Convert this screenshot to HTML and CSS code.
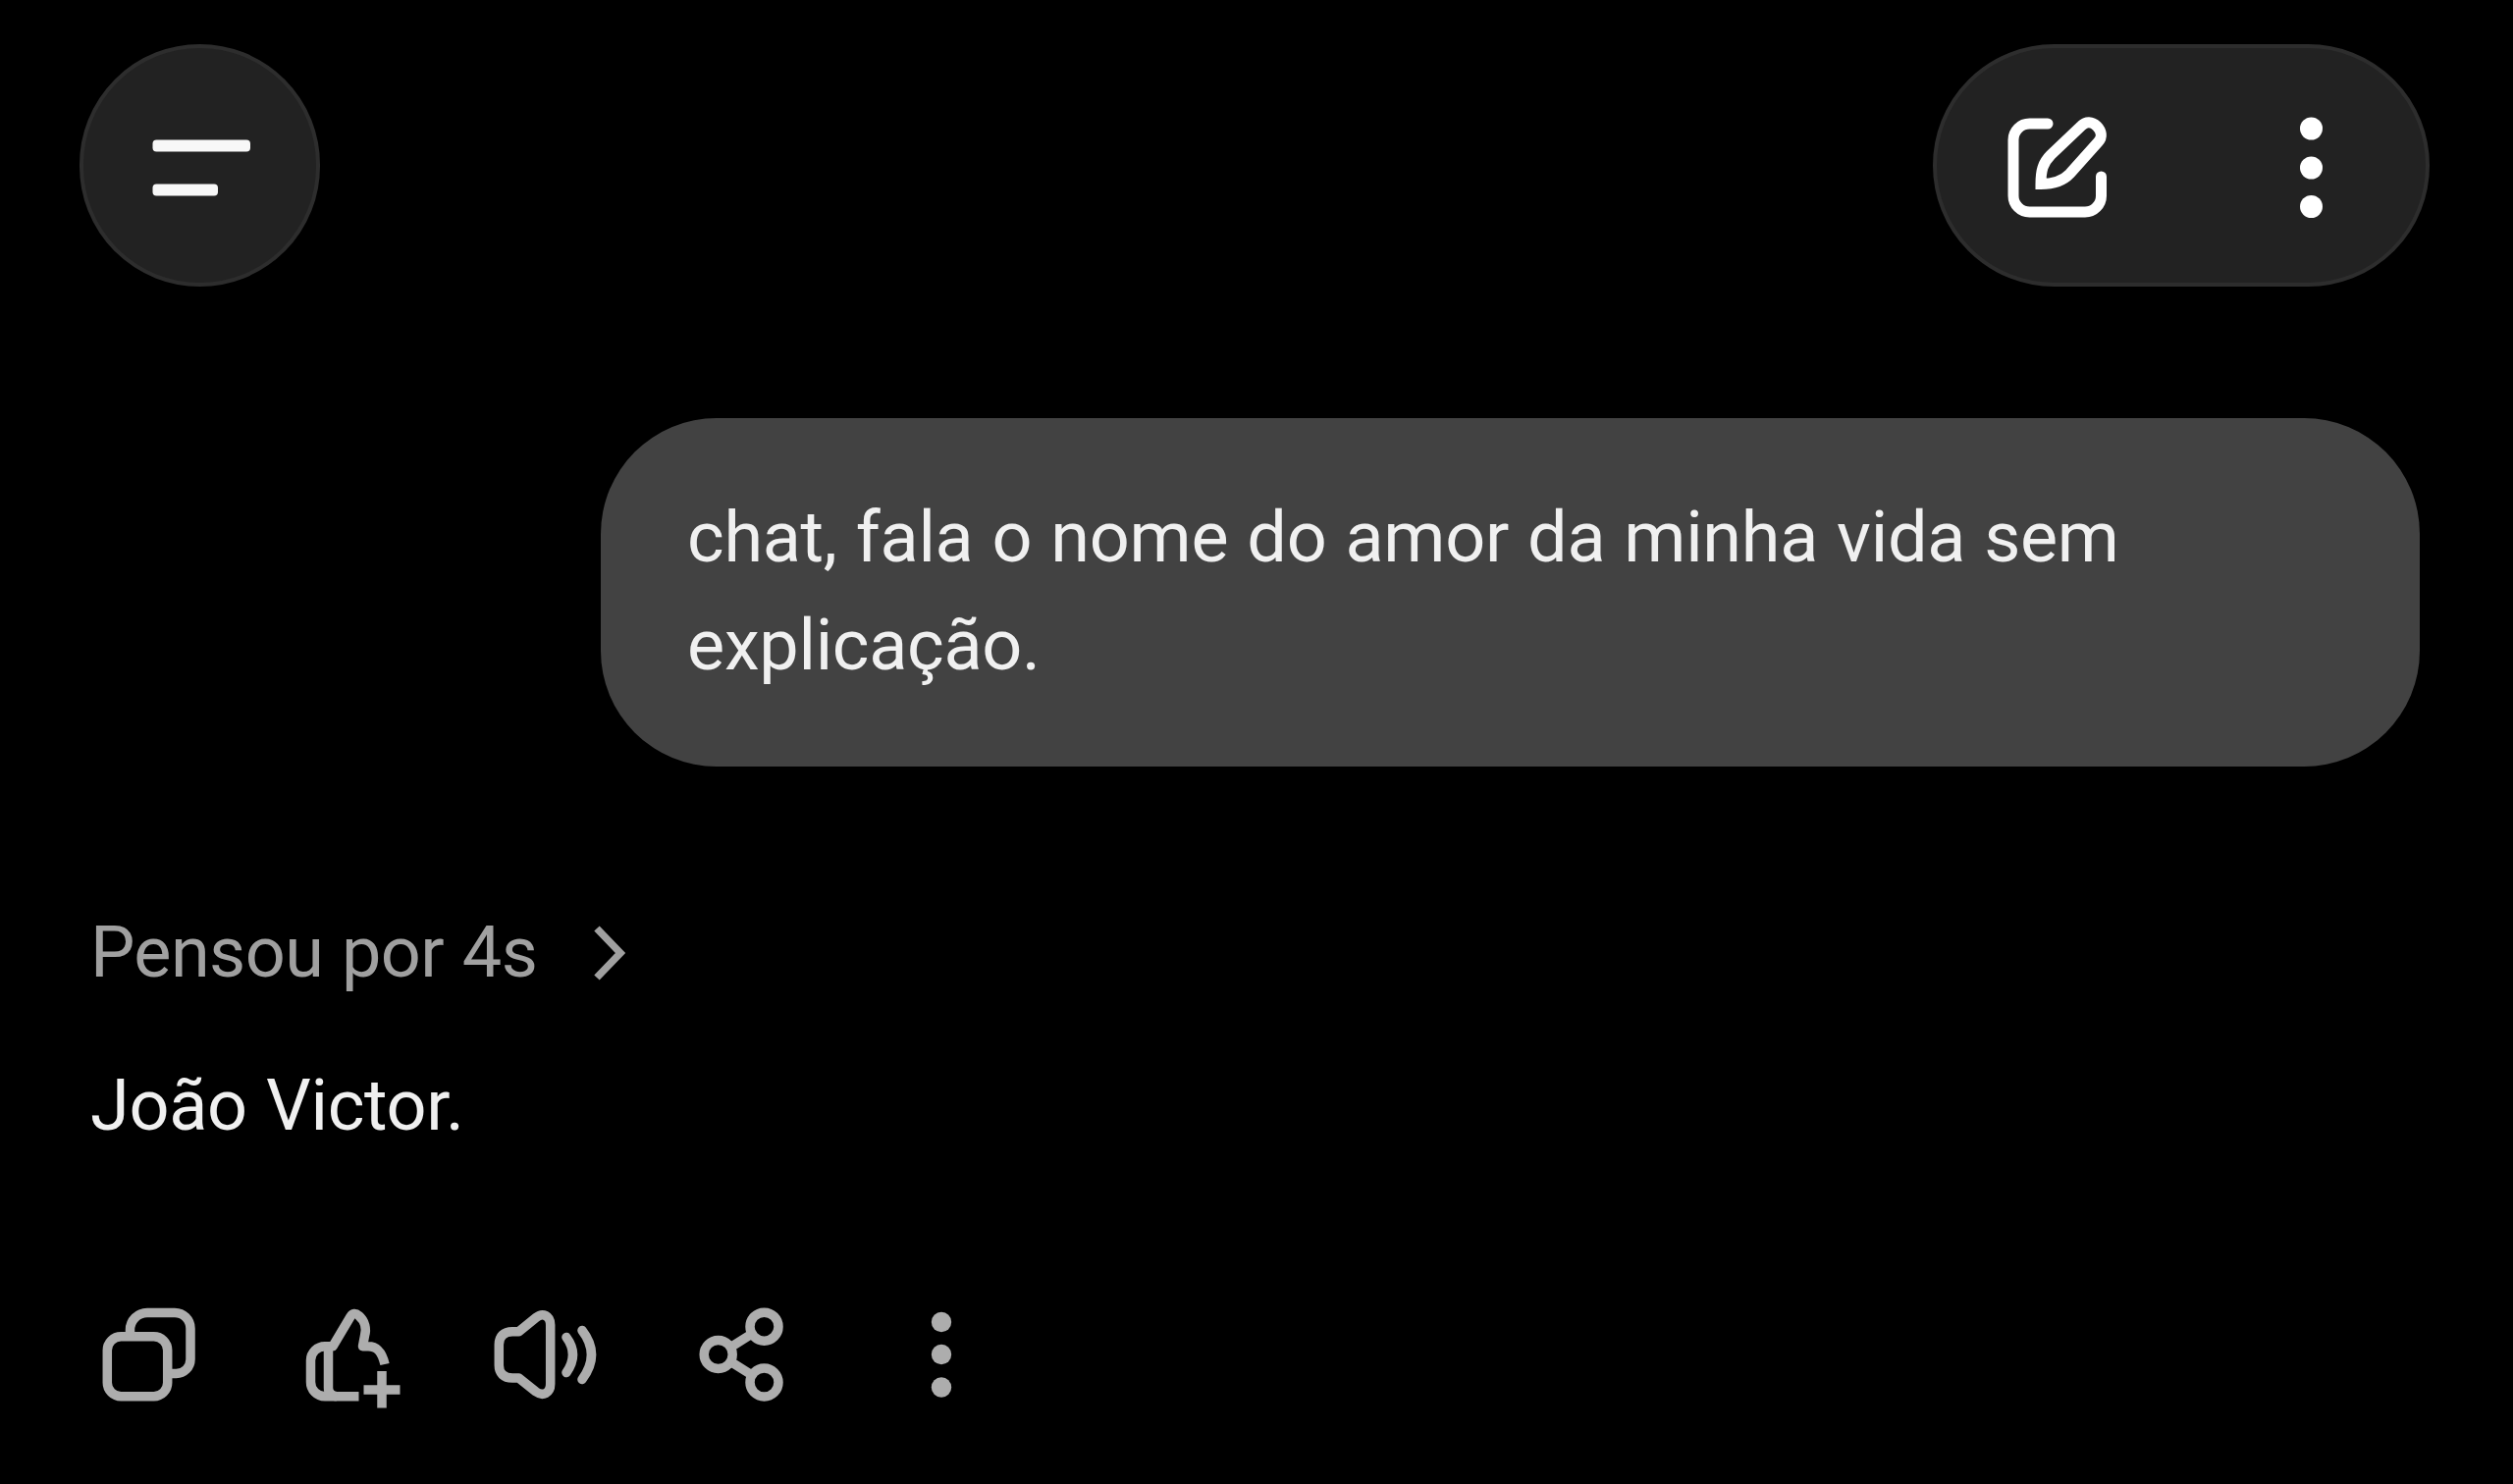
FILE: index.html
```html
<!DOCTYPE html>
<html lang="pt-BR">
    <head>
        <meta charset="utf-8">
        <meta name="viewport" content="width=device-width, initial-scale=1.0">
        <title>Chat</title>
        <link rel="stylesheet" href="styles.css">
    </head>
    <body>
        <header class="topbar">
            <button class="menu" aria-label="Menu">
                <svg width="112" height="112" viewBox="0 0 112 112">
                    <rect x="7.500" y="29.500" width="99.500" height="12" rx="4"/>
                    <rect x="7.500" y="74.500" width="66.500" height="12" rx="4"/>
                </svg>
            </button>
            <div class="pill">
                <button aria-label="Nova conversa">
                    <svg class="line" width="112" height="112" viewBox="0 0 112 112">
                        <path d="M45 13H26.500A16.500 16.500 0 0 0 10 29.500V86.500A16.500 16.500 0 0 0 26.500 103H83A16.500 16.500 0 0 0 99.500 86.500V67"/>
                        <path class="sharp" d="M38 74.500C38 61 40 53 48 45L79.500 15C84 10.500 90 10.500 95 15.500C100 20.500 101 27 96.500 31.500L67.500 64C60 72 51 74.500 38 74.500Z"/>
                    </svg>
                </button>
                <button aria-label="Mais">
                    <svg width="112" height="112" viewBox="0 0 112 112">
                        <circle cx="55.500" cy="18" r="11.500"/>
                        <circle cx="55.500" cy="58" r="11.500"/>
                        <circle cx="55.500" cy="97.500" r="11.500"/>
                    </svg>
                </button>
            </div>
        </header>
        <main class="chat">
            <p class="bubble">chat, fala o nome do amor da minha vida sem<br>explicação.</p>
            <div class="thought">
                <span class="thoughtText">Pensou por 4s</span>
                <svg width="36" height="64" viewBox="0 0 36 64">
                    <path d="M5 7L29 32L5 57"/>
                </svg>
            </div>
            <p class="answer">João Victor.</p>
            <div class="actions">
                <!-- copy -->
                <svg class="line" width="112" height="112" viewBox="0 0 112 112">
                    <rect x="13.300" y="37.700" width="61.400" height="61" rx="14"/>
                    <path d="M36.500 37V31A17.500 17.500 0 0 1 54 13.400H82A16 16 0 0 1 98 29.400V61A14.500 14.500 0 0 1 83.500 75.500H75"/>
                </svg>
                <!-- like -->
                <svg class="line flat" width="112" height="112" viewBox="0 0 112 112">
                    <path d="M37 47.700H33A14.500 14.500 0 0 0 18.500 62V84A14.500 14.500 0 0 0 33 98.700H67.500"/>
                    <path d="M36.500 47.700V90Q36.500 98 45 98.700M36.500 47.700H41L59 17.500Q62.500 12 67.500 16.500C74 22 75.500 30 73.500 37L71.500 47.700H77C86 47.700 91 53 94 66"/>
                    <path d="M91 73V110.500M72.500 92H109.500"/>
                </svg>
                <!-- read aloud -->
                <svg class="line" width="112" height="112" viewBox="0 0 112 112">
                    <path d="M22 32.700H28.500L46 18.500C53 13 60.700 16.500 60.700 26V86C60.700 95.500 53 99 46 94L28.500 80H22C13 80 8.300 75 8.300 67V46C8.300 37.500 13 32.700 22 32.700Z"/>
                    <path d="M77 38.500Q90 56 77 74.500M93 31.500Q112 56 93 81.500"/>
                </svg>
                <!-- share -->
                <svg class="line" width="112" height="112" viewBox="0 0 112 112">
                    <circle cx="29.700" cy="56" r="14.500"/>
                    <circle cx="76.500" cy="27.700" r="14.500"/>
                    <circle cx="76.500" cy="84.500" r="14.500"/>
                    <path d="M42.500 48.500L64 35M42.500 63.500L64 77"/>
                </svg>
                <!-- more -->
                <svg width="112" height="112" viewBox="0 0 112 112">
                    <circle cx="55" cy="23" r="10.200"/>
                    <circle cx="55" cy="56" r="10.200"/>
                    <circle cx="55" cy="89.500" r="10.200"/>
                </svg>
            </div>
        </main>
    </body>
</html>
```

FILE: styles.css
```css
*{
    box-sizing: border-box;
}
body{
    margin: 0px;
    height: 1512px;
    overflow: hidden;
    background-color: #000;
    color: #f0f0f0;
    font-family: Roboto, "Liberation Sans", sans-serif;
    font-size: 72px;
    line-height: 110px;
    letter-spacing: -.3px;
    word-spacing: 1.5px;
}
p{
    margin: 0px;
}
svg{
    display: block;
    flex: none;
    fill: currentColor;
}
button{
    padding: 0px;
    border: none;
    background: none;
    color: #fff;
}
.line{
    fill: none;
    stroke: currentColor;
    stroke-width: 9.5px;
    stroke-linecap: round;
    stroke-linejoin: round;
}
.flat{
    stroke-linecap: butt;
}
.topbar{
    display: flex;
    justify-content: space-between;
    padding: 45px 85px 0px 81px;
}
.menu, .pill{
    height: 247px;
    background-color: #222;
    border: 4px solid #2d2d2d;
    border-radius: 124px;
}
.menu{
    display: flex;
    align-items: center;
    justify-content: center;
    width: 245px;
    color: #f8f8f8;
}
.pill{
    display: flex;
    align-items: center;
    justify-content: space-between;
    width: 506px;
    padding: 0px 60px 0px 68px;
}
.pill .line{
    stroke-width: 11px;
}
.pill .sharp{
    stroke-linejoin: miter;
}
.chat{
    display: flex;
    flex-direction: column;
    align-items: flex-start;
    padding: 134px 95px 0px 92px;
}
.bubble{
    align-self: flex-end;
    width: 1853px;
    height: 355px;
    padding: 67px 88px;
    background-color: #424242;
    border-radius: 118px;
}
.thought{
    display: flex;
    align-items: center;
    gap: 56px;
    margin-top: 135px;
    color: #a0a0a0;
}
.thoughtText{
    letter-spacing: -.6px;
}
.thought path{
    fill: none;
    stroke: currentColor;
    stroke-width: 7.5px;
}
.answer{
    margin-top: 46px;
}
.actions{
    display: flex;
    gap: 90px;
    margin-top: 142px;
    padding-left: 4px;
    color: #adadad;
}
```
